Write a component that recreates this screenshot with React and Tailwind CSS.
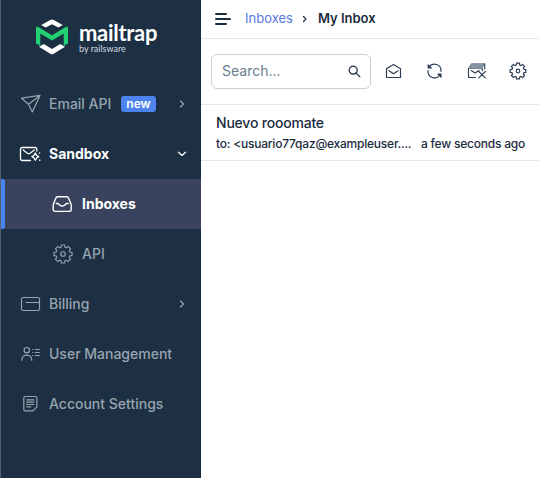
import React from "react";

const gearPath = (c, ro, ri) => {
  const pts = [];
  for (let i = 0; i < 8; i++) {
    const a = (i * Math.PI) / 4 - Math.PI / 2;
    [[-0.27, ri], [-0.19, ro], [0.19, ro], [0.27, ri]].forEach(([d, r]) =>
      pts.push(`${(c + r * Math.cos(a + d)).toFixed(2)} ${(c + r * Math.sin(a + d)).toFixed(2)}`)
    );
  }
  return `M${pts.join("L")}Z`;
};

const Icon = ({ w = 22, h = 20, sw = 1.2, className = "", children }) => (
  <svg
    width={w}
    height={h}
    viewBox={`0 0 ${w} ${h}`}
    fill="none"
    stroke="currentColor"
    strokeWidth={sw}
    strokeLinecap="round"
    strokeLinejoin="round"
    className={`shrink-0 ${className}`}
  >
    {children}
  </svg>
);

const Gear = ({ s = 20, ro = 9.2, ri = 7.1, r = 2.3, sw = 1.1 }) => (
  <Icon w={s} h={s} sw={sw}>
    <path d={gearPath(s / 2, ro, ri)} />
    <circle cx={s / 2} cy={s / 2} r={r} />
  </Icon>
);

const Plane = () => (
  <Icon>
    <path d="M2.500 4.200 21 1.400 13.300 18 9.500 10.200ZM9.500 10.200 21 1.400" />
  </Icon>
);

const Sandbox = () => (
  <Icon sw={1.3}>
    <path d="M11.500 16.500H3.300A1.800 1.800 0 0 1 1.500 14.700V5.300A1.800 1.800 0 0 1 3.300 3.500H16A1.800 1.800 0 0 1 17.800 5.300V7M4.200 6l4.200 3.200a2.300 2.300 0 0 0 2.700 0L15.300 6" />
    <path d="M16.300 9q.9 2.800 3.400 3.700-2.500.9-3.400 3.700-.9-2.800-3.400-3.700 2.500-.9 3.400-3.700Z" />
    <path d="M20.600 8.800v.4M20.800 16v.4" />
  </Icon>
);

const Inbox = () => (
  <Icon w={20} h={20} sw={1.4}>
    <path d="M1.200 10.500 3.700 4.600A2.300 2.300 0 0 1 5.900 2.800h8.600a2.300 2.300 0 0 1 2.200 1.800L19.200 10.500v4.900a2 2 0 0 1-2 2H3.200a2 2 0 0 1-2-2Z" />
    <path d="M4.200 9.500h1.500c1 0 1.500 2.500 4.500 2.500s3.500-2.500 4.500-2.500H16.200" />
  </Icon>
);

const Card = () => (
  <Icon>
    <rect x="2.500" y="3.500" width="18" height="13" rx="1.800" />
    <path d="M7 8.500h13" />
  </Icon>
);

const Users = () => (
  <Icon>
    <circle cx="7.800" cy="6.200" r="2.700" />
    <path d="M2.800 16.300c0-6.800 10-6.800 10 0M16.300 5.500h4M16.300 8.500h4M16.300 11.500h4M13.700 5.500h.2M13.700 8.500h.2M13.700 11.500h.2" />
  </Icon>
);

const Doc = () => (
  <Icon>
    <path d="M6.200 2.500h10.300a1.400 1.400 0 0 1 1.400 1.400v9L14 16.900H6.200a1.400 1.400 0 0 1-1.400-1.400V3.900A1.400 1.400 0 0 1 6.200 2.500ZM7.800 5.900h7.200M7.800 8.200h7.200M7.800 10.500h7M7.800 12.800h4" />
  </Icon>
);

const Chevron = ({ down }) => (
  <Icon w={10} h={10} sw={1.3} className="mr-[14px] ml-auto">
    <path d={down ? "M1.500 3.200 5 6.400 8.500 3.200" : "M3.500 2 6.500 5 3.500 8"} />
  </Icon>
);

const Row = ({ icon, label, badge, chevron, active }) => (
  <a className={`flex h-[50px] items-center pl-[18px] text-[14px] ${active ? "font-bold text-white" : "font-medium text-[#98a4af]"}`}>
    {icon}
    <span className="ml-2 pb-[2px] whitespace-nowrap">{label}</span>
    {badge && (
      <span className="ml-[10px] flex h-4 items-center rounded-[3px] bg-[#4c83ee] px-[5px] pb-px text-[12px] font-semibold text-white">
        {badge}
      </span>
    )}
    {chevron && <Chevron down={chevron === "down"} />}
  </a>
);

const Logo = () => (
  <div className="flex h-[79px] items-start pl-[35px]">
    <svg width="32" height="36" viewBox="0 0 32 36" className="mt-[18.500px] shrink-0">
      <path d="M5.200 5.900 14.300.9a3.500 3.500 0 0 1 3.400 0l9.100 5-4.500 2.600L16 5.300 9.700 8.500Z" fill="#fff" />
      <path d="M0 9.300Q0 6.700 2.300 8L16 16.300 29.700 8q2.300-1.300 2.300 1.300V24.500l-4.300 2.300V14.600L16 21.600 4.300 14.600v12.200L0 24.500Z" fill="#22d172" />
      <path d="m3 27.700 4.800-2.600L16 29.900l8.200-4.800 4.800 2.600-11.300 7a3.300 3.300 0 0 1-3.400 0Z" fill="#fff" />
    </svg>
    <div className="ml-[11px] flex flex-col pt-[20px] text-white">
      <span className="font-['Lato'] text-[22px] leading-[25px] font-bold tracking-[-0.3px]">mailtrap</span>
      <span className="font-['Lato'] text-[9px] leading-[8px] text-[#d4dae0]">by railsware</span>
    </div>
  </div>
);

export default function App() {
  return (
    <div className="flex h-screen w-full overflow-hidden bg-white font-['Inter',sans-serif] text-[#1b2b3e]">
      <aside className="w-[201px] shrink-0 border-l border-[#53606d] bg-[#1c2f43]">
        <Logo />
        <nav>
          <Row icon={<Plane />} label="Email API" badge="new" chevron="right" />
          <Row icon={<Sandbox />} label="Sandbox" chevron="down" active />
          <a className="flex h-[50px] items-center bg-[#3a435e] text-[14px] font-bold text-white">
            <span className="mr-[47px] h-full w-1 rounded-r-[2px] bg-[#4c83ee]" />
            <Inbox />
            <span className="ml-[10px] pb-[2px]">Inboxes</span>
          </a>
          <a className="flex h-[50px] items-center pl-[52px] text-[14px] font-medium text-[#98a4af]">
            <Gear />
            <span className="ml-[9px] pb-[2px]">API</span>
          </a>
          <Row icon={<Card />} label="Billing" chevron="right" />
          <Row icon={<Users />} label="User Management" />
          <Row icon={<Doc />} label="Account Settings" />
        </nav>
      </aside>
      <main className="min-w-0 flex-1">
        <header className="flex h-[39px] items-center border-b border-[#e5e7eb] pl-[14px] text-[13px]">
          <Icon w={17} h={14} sw={2}>
            <path d="M1 2h10M1 7h14M1 12h10" />
          </Icon>
          <span className="ml-[13px] text-[#5878df]">Inboxes</span>
          <Icon w={10} h={10} sw={1.2} className="ml-[7px]">
            <path d="M3.500 2.500 6 5 3.500 7.500" />
          </Icon>
          <span className="ml-[8px] font-semibold">My Inbox</span>
        </header>
        <div className="flex h-[66px] items-center border-b border-[#e5e7eb] pl-[10px]">
          <div className="flex h-[35px] w-[160px] items-center justify-between rounded-[6px] border border-[#cbced2] pr-[9px] pl-[10px] text-[14px] text-[#6b7c8a]">
            <span className="pb-[2px]">Search...</span>
            <Icon w={13} h={13} sw={1.2} className="text-[#1b2b3e]">
              <circle cx="5.200" cy="5.200" r="4" />
              <path d="m8.200 8.200 3.700 3.700" />
            </Icon>
          </div>
          <div className="ml-[14px] flex items-center gap-[23px] pb-[2px] text-[#2b3d55]">
            <Icon w={18} h={18} sw={1.2}>
              <path d="M1.500 6.800 8.500 2.500l7 4.300v8.700h-14ZM4 8.700 8.500 11.700 13 8.700" />
            </Icon>
            <Icon w={18} h={18} sw={1.2}>
              <path d="M3 5a6.600 6.600 0 0 1 12 4.300M14 13A6.600 6.600 0 0 1 2 8.700" />
              <path d="M2.200 3v3h3ZM15 15v-3h-3Z" fill="currentColor" />
            </Icon>
            <Icon w={19} h={18} sw={1.1}>
              <path d="M4.500 1.800h13.200L14.500 6.500H1.700Z" fill="#8793a3" stroke="#77859a" />
              <path d="M17.700 2v5M1.500 6.500v9H8.500M15.300 6.500v2.300M4.300 8.500 8 11l4-2.500M11.800 9.500l6.500 6.300M18.300 9.500 11.800 15.800" />
            </Icon>
            <Gear s={18} ro={8} ri={6.2} r={1.8} sw={1.2} />
          </div>
        </div>
        <article className="h-[56px] border-b border-[#e5e7eb] pt-[8px] pr-[14px] pl-[15px]">
          <div className="text-[14px] leading-[20px] font-medium tracking-[-0.2px]">Nuevo rooomate</div>
          <div className="flex justify-between text-[12px] leading-[22px] font-medium tracking-[-0.22px] whitespace-nowrap">
            <span>to: &lt;usuario77qaz@exampleuser....</span>
            <span>a few seconds ago</span>
          </div>
        </article>
      </main>
    </div>
  );
}
